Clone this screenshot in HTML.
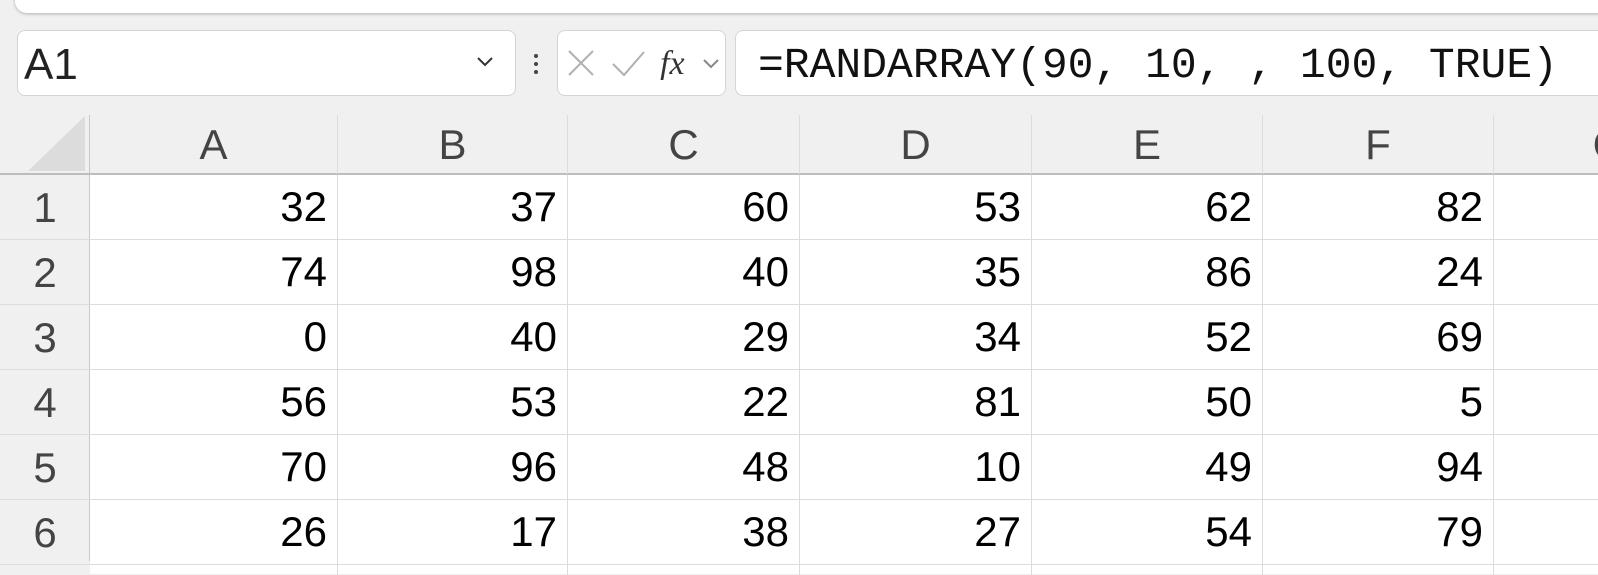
<!DOCTYPE html>
<html><head><style>
*{margin:0;padding:0;box-sizing:border-box}
body{width:1598px;height:561px;overflow:hidden;background:#f0f0f0;position:relative;font-family:"Liberation Sans",sans-serif}
.abs{position:absolute}
.top{left:15px;top:-20px;width:1620px;height:33px;background:#fff;border-radius:12px;box-shadow:0 1px 3px rgba(0,0,0,.25)}
.box{background:#fff;border:1px solid #d4d4d4;border-radius:8px}
.grid{left:90px;top:174px;width:1520px;height:400px;background:#fff}
.col{top:115px;height:59px;font-size:42px;color:#444;text-align:center;line-height:59px;border-left:1px solid #dcdcdc}
.rn{left:0;width:90px;font-size:42px;color:#444;text-align:center}
.cell{font-size:42px;color:#000;text-align:right;padding-right:10px}
</style></head><body>
<div class="abs top"></div>
<div class="abs box" style="left:17px;top:30px;width:499px;height:66px"></div>
<div class="abs" style="left:24px;top:40px;font-size:44px;color:#222;line-height:50px">A1</div>
<svg class="abs" style="left:476px;top:56px" width="18" height="12"><path d="M2 2 L9 9 L16 2" stroke="#333" stroke-width="2" fill="none"/></svg>
<svg class="abs" style="left:532px;top:53px" width="8" height="22"><circle cx="4" cy="3" r="2" fill="#444"/><circle cx="4" cy="11" r="2" fill="#444"/><circle cx="4" cy="19" r="2" fill="#444"/></svg>
<div class="abs box" style="left:557px;top:30px;width:169px;height:66px"></div>
<svg class="abs" style="left:566px;top:46px" width="160" height="34">
<path d="M3 5 L27 29 M27 5 L3 29" stroke="#b0b0b0" stroke-width="2" fill="none"/>
<path d="M47 18 L58 29 L78 6" stroke="#b0b0b0" stroke-width="2" fill="none"/>
<text x="94" y="28" font-family="Liberation Serif" font-style="italic" font-size="34" fill="#333">fx</text>
<path d="M138 14 L145 21 L152 14" stroke="#888" stroke-width="2" fill="none"/>
</svg>
<div class="abs box" style="left:735px;top:30px;width:900px;height:66px"></div>
<div class="abs" style="left:758px;top:38px;font-family:'Liberation Mono',monospace;font-size:43px;line-height:56px;color:#111;white-space:pre">=RANDARRAY(90, 10, , 100, TRUE)</div>
<svg class="abs" style="left:28px;top:116px" width="58" height="56"><path d="M57 0 L57 55 L0 55 Z" fill="#dcdcdc"/></svg>
<div class="abs" style="left:89px;top:115px;width:1px;height:446px;background:#c8c8c8"></div>
<div class="abs grid"></div>
<div class="abs" style="left:0;top:173px;width:1598px;height:2px;background:#bdbdbd"></div>
<div class="abs col" style="left:90px;width:247px;border-left:none">A</div>
<div class="abs col" style="left:337px;width:230px">B</div>
<div class="abs col" style="left:567px;width:232px">C</div>
<div class="abs col" style="left:799px;width:232px">D</div>
<div class="abs col" style="left:1031px;width:231px">E</div>
<div class="abs col" style="left:1262px;width:231px">F</div>
<div class="abs col" style="left:1493px;width:231px">G</div>
<div id="g"></div>
<script>
(function(){
var data=[[32,37,60,53,62,82],[74,98,40,35,86,24],[0,40,29,34,52,69],[56,53,22,81,50,5],[70,96,48,10,49,94],[26,17,38,27,54,79]];
var cols=[90,337,567,799,1031,1262,1493];
var h='';
for(var c=1;c<cols.length;c++)h+='<div class="abs" style="left:'+cols[c]+'px;top:175px;width:1px;height:400px;background:#dcdcdc"></div>';
for(var r=0;r<6;r++){var y=175+r*65;
h+='<div class="abs" style="left:0;top:'+(y+64)+'px;width:1598px;height:1px;background:#dcdcdc"></div>';
h+='<div class="abs rn" style="top:'+(y+8)+'px;line-height:50px">'+(r+1)+'</div>';
for(var c=0;c<6;c++)h+='<div class="abs cell" style="left:'+cols[c]+'px;width:'+(cols[c+1]-cols[c])+'px;top:'+(y+7)+'px;line-height:50px">'+data[r][c]+'</div>';}
document.getElementById('g').innerHTML=h;
})();
</script>
</body></html>
